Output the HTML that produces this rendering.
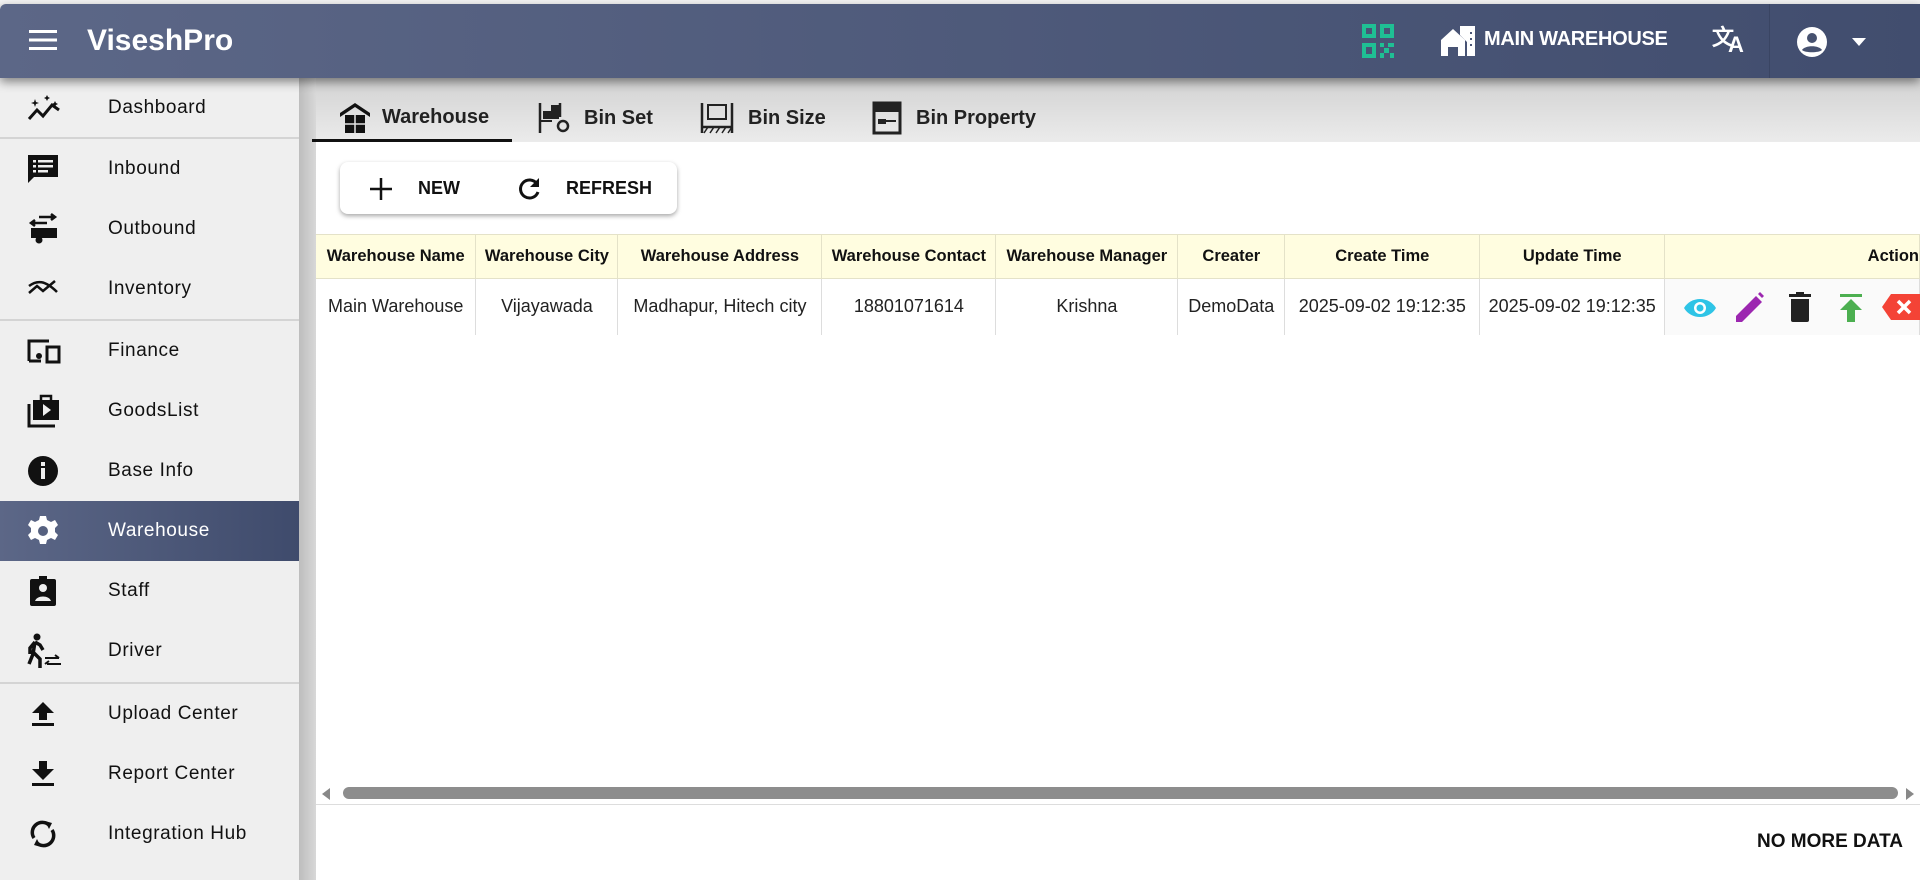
<!DOCTYPE html>
<html><head><meta charset="utf-8"><style>
*{box-sizing:border-box;margin:0;padding:0}
body{width:1920px;height:880px;overflow:hidden;font-family:"Liberation Sans",sans-serif;background:#efefef;position:relative;color:#111}
.hdr{position:absolute;left:0;top:4px;width:1920px;height:74px;background:linear-gradient(90deg,#5c6787,#414d6e);box-shadow:0 4px 10px rgba(0,0,0,.45);z-index:5;border-radius:6px 0 0 0}
.topline{position:absolute;left:0;top:0;width:1920px;height:4px;background:#f4f4f4}
.abs{position:absolute}
.side{position:absolute;left:0;top:78px;width:299px;height:802px;background:#efefef}
.strip{position:absolute;left:299px;top:78px;width:17px;height:802px;background:linear-gradient(90deg,#bdbdbd,#d8d8d8)}
.item{position:absolute;left:0;width:299px;height:60px;font-size:19px;letter-spacing:.6px;color:#111}
.item span{position:absolute;left:108px;top:50%;transform:translateY(-50%)}
.item svg{position:absolute;left:27px;top:50%;transform:translateY(-50%)}
.sel{background:linear-gradient(90deg,#5c6787,#3f4b6c);color:#fff}
.div{position:absolute;left:0;width:299px;height:2px;background:#d4d4d4}
.tabs{position:absolute;left:316px;top:78px;width:1604px;height:64px;background:linear-gradient(180deg,#d2d2d2,#ebebeb)}
.tab{position:absolute;top:23px;font-size:20px;font-weight:bold;color:#222;display:flex;align-items:center}
.panel{position:absolute;left:316px;top:142px;width:1604px;height:738px;background:#fff}
table{border-collapse:collapse;position:absolute;left:316px;top:234px;table-layout:fixed}
td,th{border:1px solid #ddd;white-space:nowrap;overflow:hidden;text-align:center;font-size:18px}
th{background:#fffde0;height:44px;font-size:16.5px;font-weight:bold;border-color:#e4e2c8}
td{height:56px;color:#222;border-bottom:none}
tr td:first-child,tr th:first-child{border-left:none}
</style></head><body>
<div class="topline"></div>
<div class="hdr">
 <svg class="abs" style="left:29px;top:25px" width="28" height="22" viewBox="0 0 28 22"><rect y="1" width="28" height="3" fill="#fff"/><rect y="9.5" width="28" height="3" fill="#fff"/><rect y="18" width="28" height="3" fill="#fff"/></svg>
 <div class="abs" style="left:87px;top:20px;color:#fff;font-size:30px;font-weight:bold">ViseshPro</div>
 <svg class="abs" style="left:1362px;top:20px" width="32" height="34" viewBox="0 0 32 34" fill="#1fbf94"><path d="M0 0h14v14H0zM4 4v6h6V4zM18 0h14v14H18zM22 4v6h6V4zM0 19h14v15H0zM4 23v7h6v-7zM18 19h4v4h-4zM26 19h6v4h-6zM22 24h5v5h-5zM18 29h4v5h-4zM28 29h4v5h-4z"/></svg>
 <svg class="abs" style="left:1441px;top:22px" width="34" height="30" viewBox="0 0 34 30" fill="#fff"><path d="M0 14L12 3l12 11v16h-7v-9h-10v9H0z"/><path d="M19 0h15v30h-8V16L19 9z"/><rect x="29" y="6" width="2" height="2" fill="#4a5576"/><rect x="29" y="12" width="2" height="2" fill="#4a5576"/><rect x="29" y="18" width="2" height="2" fill="#4a5576"/></svg>
 <div class="abs" style="left:1484px;top:24px;color:#fff;font-size:20px;font-weight:bold;letter-spacing:-.3px">MAIN WAREHOUSE</div>
 <div class="abs" style="left:1712px;top:16px;color:#fff;font-size:22px;font-weight:bold">文</div>
 <div class="abs" style="left:1728px;top:28px;color:#fff;font-size:22px;font-weight:bold">A</div>
 <div class="abs" style="left:1769px;top:0;width:1px;height:74px;background:#3a4563"></div>
 <svg class="abs" style="left:1796px;top:22px" width="32" height="32" viewBox="0 0 32 32"><circle cx="16" cy="16" r="15" fill="#fff"/><circle cx="16" cy="12" r="5" fill="#46516f"/><path d="M6 24c3-5 17-5 20 0c-3 3-17 3-20 0z" fill="#46516f"/></svg>
 <svg class="abs" style="left:1852px;top:34px" width="14" height="8"><path d="M0 0h14L7 8z" fill="#fff"/></svg>
</div>

<div class="side">
 <div class="item" style="top:0"><svg width="34" height="30" viewBox="0 0 34 30"><path d="M2 26l8-9 6 6 9-11 7 5" stroke="#111" stroke-width="3" fill="none"/><path d="M8 6l1 3 3 1-3 1-1 3-1-3-3-1 3-1zM20 2l1 2 2 1-2 1-1 2-1-2-2-1 2-1zM28 8l1 2 2 1-2 1-1 2-1-2-2-1 2-1z" fill="#111"/></svg><span>Dashboard</span></div>
 <div class="div" style="top:59px"></div>
 <div class="item" style="top:61px"><svg width="32" height="32" viewBox="0 0 32 32"><path d="M1 2h30v22H7l-6 6z" fill="#111"/><rect x="6" y="7" width="3" height="2.5" fill="#efefef"/><rect x="11" y="7" width="15" height="2.5" fill="#efefef"/><rect x="6" y="12" width="3" height="2.5" fill="#efefef"/><rect x="11" y="12" width="15" height="2.5" fill="#efefef"/><rect x="6" y="17" width="3" height="2.5" fill="#efefef"/><rect x="11" y="17" width="10" height="2.5" fill="#efefef"/></svg><span>Inbound</span></div>
 <div class="item" style="top:121px"><svg width="32" height="32" viewBox="0 0 32 32"><path d="M12 4h16M24 1l4 3-4 3M4 10h16M8 7l-4 3 4 3" stroke="#111" stroke-width="2.5" fill="none"/><rect x="4" y="15" width="26" height="10" fill="#111"/><circle cx="12" cy="27" r="3.5" fill="#111"/></svg><span>Outbound</span></div>
 <div class="item" style="top:181px"><svg width="32" height="32" viewBox="0 0 32 32"><path d="M2 20l8-7 6 5 12-10M2 13c8-6 16-6 28 6" stroke="#111" stroke-width="2.5" fill="none"/></svg><span>Inventory</span></div>
 <div class="div" style="top:241px"></div>
 <div class="item" style="top:243px"><svg width="34" height="28" viewBox="0 0 34 28"><path d="M2 24V4h20M2 24h12" stroke="#111" stroke-width="3" fill="none"/><circle cx="12" cy="19" r="3" fill="#111"/><rect x="20" y="10" width="12" height="15" fill="none" stroke="#111" stroke-width="3"/></svg><span>Finance</span></div>
 <div class="item" style="top:303px"><svg width="34" height="34" viewBox="0 0 34 34"><path d="M2 10v22h26" stroke="#111" stroke-width="3" fill="none"/><path d="M6 6h26v20H6z" fill="#111"/><path d="M14 6V2h10v4" stroke="#111" stroke-width="2.5" fill="none"/><path d="M16 10v12l8-6z" fill="#efefef"/></svg><span>GoodsList</span></div>
 <div class="item" style="top:363px"><svg width="32" height="32" viewBox="0 0 32 32"><circle cx="16" cy="16" r="15" fill="#111"/><rect x="14" y="13" width="4" height="11" fill="#efefef"/><rect x="14" y="7" width="4" height="4" fill="#efefef"/></svg><span>Base Info</span></div>
 <div class="item sel" style="top:423px"><svg width="32" height="32" viewBox="0 0 32 32"><path d="M13 1h6l1 4 4 2 4-2 3 5-3 3v4l3 3-3 5-4-2-4 2-1 4h-6l-1-4-4-2-4 2-3-5 3-3v-4L1 10l3-5 4 2 4-2z" fill="#fff"/><circle cx="16" cy="16" r="5" fill="#56617f"/></svg><span>Warehouse</span></div>
 <div class="item" style="top:483px"><svg width="32" height="34" viewBox="0 0 32 34"><rect x="3" y="5" width="26" height="27" rx="2" fill="#111"/><rect x="12" y="2" width="8" height="6" fill="#111"/><circle cx="16" cy="14" r="4" fill="#efefef"/><path d="M8 27c2-6 14-6 16 0z" fill="#efefef"/></svg><span>Staff</span></div>
 <div class="item" style="top:543px"><svg width="34" height="36" viewBox="0 0 34 36"><circle cx="10" cy="4" r="3.5" fill="#111"/><path d="M8 9l-5 6v6M8 9l5 3 3 5M8 9l-2 12-4 10M7 20l6 6v9" stroke="#111" stroke-width="3.5" fill="none"/><path d="M18 25h14M28 22l4 3M20 31h14M22 28l-4 3" stroke="#111" stroke-width="2" fill="none"/></svg><span>Driver</span></div>
 <div class="div" style="top:604px"></div>
 <div class="item" style="top:606px"><svg width="32" height="32" viewBox="0 0 32 32"><path d="M16 4l-11 11h7v7h8v-7h7z" fill="#111"/><rect x="5" y="25" width="22" height="3" fill="#111"/></svg><span>Upload Center</span></div>
 <div class="item" style="top:666px"><svg width="32" height="32" viewBox="0 0 32 32"><path d="M12 3h8v8h7L16 22 5 11h7z" fill="#111"/><rect x="5" y="25" width="22" height="3" fill="#111"/></svg><span>Report Center</span></div>
 <div class="item" style="top:726px"><svg width="32" height="32" viewBox="0 0 32 32"><path d="M7 20a10 10 0 0 1 15-13M25 12a10 10 0 0 1-15 13" stroke="#111" stroke-width="3.5" fill="none"/><path d="M18 3l7 2-3 6zM14 29l-7-2 3-6z" fill="#111"/></svg><span>Integration Hub</span></div>
</div>
<div class="strip"></div>

<div class="tabs">
 <div class="tab" style="left:22px"><svg width="34" height="32" viewBox="0 0 34 32"><path d="M17 2L2 12v4l15-10 15 10v-4z" fill="#111"/><rect x="7" y="14" width="20" height="18" fill="#111"/><path d="M17 14v18M7 23h20" stroke="#e3e3e3" stroke-width="1.5"/></svg><span style="margin-left:10px">Warehouse</span></div>
 <div class="abs" style="left:-4px;top:61px;width:200px;height:3px;background:#111"></div>
 <div class="tab" style="left:222px"><svg width="34" height="34" viewBox="0 0 34 34"><path d="M2 2v30M22 2v14" stroke="#222" stroke-width="2.5"/><rect x="5" y="10" width="8" height="8" fill="#222"/><rect x="13" y="4" width="8" height="14" fill="#222"/><circle cx="25" cy="25" r="5" fill="none" stroke="#222" stroke-width="2.5"/><path d="M2 20h12" stroke="#222" stroke-width="2"/></svg><span style="margin-left:12px">Bin Set</span></div>
 <div class="tab" style="left:384px"><svg width="34" height="34" viewBox="0 0 34 34"><path d="M2 2v30M32 2v30M2 26h30" stroke="#222" stroke-width="2.5"/><rect x="8" y="4" width="18" height="14" fill="none" stroke="#222" stroke-width="2"/><path d="M4 32l4-6M10 32l4-6M16 32l4-6M22 32l4-6M28 32l4-6" stroke="#222" stroke-width="1.5"/></svg><span style="margin-left:14px">Bin Size</span></div>
 <div class="tab" style="left:556px"><svg width="30" height="34" viewBox="0 0 30 34"><rect x="2" y="2" width="26" height="30" fill="none" stroke="#222" stroke-width="3"/><rect x="2" y="2" width="26" height="9" fill="#222"/><rect x="6" y="18" width="8" height="5" fill="#222"/><path d="M14 20h10" stroke="#222" stroke-width="2"/></svg><span style="margin-left:14px">Bin Property</span></div>
</div>

<div class="panel"></div>
<div class="abs" style="left:340px;top:162px;width:337px;height:52px;background:#fff;border-radius:8px;box-shadow:0 2px 5px rgba(0,0,0,.35)">
 <svg class="abs" style="left:30px;top:16px" width="22" height="22"><path d="M11 0v22M0 11h22" stroke="#111" stroke-width="2.5"/></svg>
 <div class="abs" style="left:78px;top:16px;font-size:18px;font-weight:bold">NEW</div>
 <svg class="abs" style="left:176px;top:14px" width="26" height="26" viewBox="0 0 26 26"><path d="M21 8A9 9 0 1 0 22 16" stroke="#111" stroke-width="3" fill="none"/><path d="M23 2v9h-9z" fill="#111"/></svg>
 <div class="abs" style="left:226px;top:16px;font-size:18px;font-weight:bold">REFRESH</div>
</div>

<table>
<tr><th style="width:160px">Warehouse Name</th><th style="width:142px">Warehouse City</th><th style="width:204px">Warehouse Address</th><th style="width:174px">Warehouse Contact</th><th style="width:182px">Warehouse Manager</th><th style="width:107px">Creater</th><th style="width:195px">Create Time</th><th style="width:185px">Update Time</th><th style="width:255px;text-align:right;padding-right:0">Action</th></tr>
<tr><td>Main Warehouse</td><td>Vijayawada</td><td>Madhapur, Hitech city</td><td>18801071614</td><td>Krishna</td><td>DemoData</td><td>2025-09-02 19:12:35</td><td>2025-09-02 19:12:35</td><td style="background:#fafafa;position:relative"></td></tr>
</table>
<svg class="abs" style="left:1683px;top:296px" width="34" height="24" viewBox="0 0 34 24"><path d="M1 12C8 0 26 0 33 12 26 24 8 24 1 12z" fill="#2ec4e6"/><circle cx="17" cy="12" r="6" fill="#fff"/><circle cx="17" cy="12" r="3.5" fill="#2ec4e6"/></svg>
<svg class="abs" style="left:1736px;top:292px" width="28" height="30" viewBox="0 0 28 30"><path d="M0 30v-6L20 4l6 6L6 30z" fill="#9c27b0"/><path d="M22 2l2-2 4 4-2 2z" fill="#9c27b0"/></svg>
<svg class="abs" style="left:1789px;top:292px" width="22" height="30" viewBox="0 0 22 30"><rect x="0" y="2" width="22" height="3" fill="#222"/><rect x="7" y="0" width="8" height="3" fill="#222"/><path d="M2 7h18v21a2 2 0 0 1-2 2H4a2 2 0 0 1-2-2z" fill="#222"/></svg>
<svg class="abs" style="left:1840px;top:294px" width="22" height="28" viewBox="0 0 22 28"><rect width="22" height="3" fill="#4caf50"/><path d="M11 5L0 16h7v12h8V16h7z" fill="#4caf50"/></svg>
<svg class="abs" style="left:1882px;top:292px" width="38" height="30" viewBox="0 0 38 30"><path d="M0 15L9 2h29v26H9z" fill="#f44336"/><path d="M16 9l12 12M28 9L16 21" stroke="#fff" stroke-width="3.5"/></svg>

<div class="abs" style="left:316px;top:784px;width:1604px;height:20px;background:#fff"></div>
<svg class="abs" style="left:322px;top:788px" width="8" height="12"><path d="M8 0v12L0 6z" fill="#888"/></svg>
<div class="abs" style="left:343px;top:787px;width:1555px;height:12px;border-radius:6px;background:#8d8d8d"></div>
<svg class="abs" style="left:1906px;top:788px" width="8" height="12"><path d="M0 0v12l8-6z" fill="#888"/></svg>
<div class="abs" style="left:316px;top:804px;width:1604px;height:1px;background:#ddd"></div>
<div class="abs" style="left:1757px;top:831px;font-size:19px;font-weight:bold;color:#111">NO MORE DATA</div>
</body></html>
